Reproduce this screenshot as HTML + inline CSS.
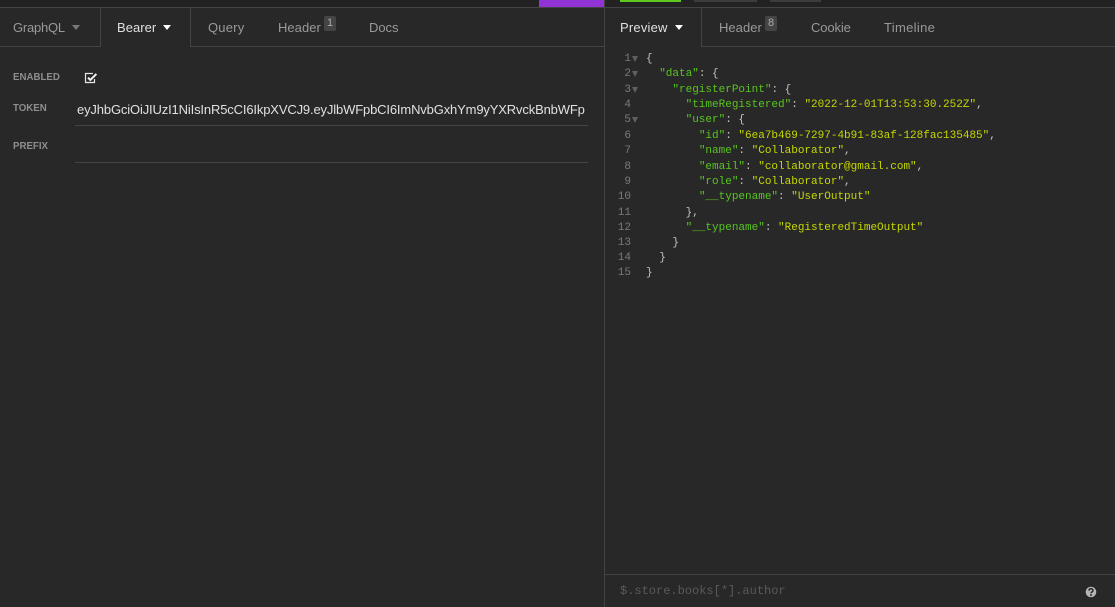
<!DOCTYPE html>
<html><head><meta charset="utf-8"><style>
html,body{margin:0;padding:0;width:1115px;height:607px;overflow:hidden;background:#282828}
body{position:relative;font-family:"Liberation Sans",sans-serif}
div{position:absolute}
.t{white-space:nowrap;font-size:13px;color:#999;top:20px;line-height:15px;letter-spacing:.2px}
.lb{white-space:nowrap;font-size:9.7px;font-weight:bold;color:#8e8e8e;left:13px;line-height:12px}
.ln{left:610px;width:21px;text-align:right;color:#7a7a7a}
.c{left:646px}
.m{font-family:"Liberation Mono",monospace;font-size:11px;line-height:15px;white-space:pre}
.c{color:#c4c4c4}
.k{color:#59c51f}.s{color:#c5d800}
.tri{width:0;height:0;border-left:4px solid transparent;border-right:4px solid transparent;border-top:5px solid #fff}
.f{left:632px;width:0;height:0;border-left:3.5px solid transparent;border-right:3.5px solid transparent;border-top:6px solid #5f5f5f}
.bd{background:#444;border-radius:2px;color:#aaa;font-size:11px;text-align:center;line-height:14px;width:12px;height:15px;top:16px}
</style></head><body>
<div style="left:0;top:0;width:1115px;height:7px;background:#222"></div>
<div style="left:0;top:7px;width:1115px;height:1px;background:#444"></div>
<div style="left:539px;top:0;width:65px;height:7px;background:#9233d6"></div>
<div style="left:620px;top:0;width:61px;height:2px;background:#5fc81f"></div>
<div style="left:694px;top:0;width:63px;height:2px;background:#3c3c3c"></div>
<div style="left:770px;top:0;width:51px;height:2px;background:#3c3c3c"></div>
<div style="left:604px;top:0;width:1px;height:607px;background:#444"></div>
<div style="left:0;top:46px;width:100px;height:1px;background:#444"></div>
<div style="left:191px;top:46px;width:413px;height:1px;background:#444"></div>
<div style="left:100px;top:8px;width:1px;height:39px;background:#444"></div>
<div style="left:190px;top:8px;width:1px;height:39px;background:#444"></div>
<div style="left:702px;top:46px;width:413px;height:1px;background:#444"></div>
<div style="left:701px;top:8px;width:1px;height:39px;background:#444"></div>
<div class="t" style="left:13px;letter-spacing:-.23px">GraphQL</div>
<div class="tri" style="left:72px;top:25px;border-top-color:#777"></div>
<div class="t" style="left:117px;color:#e0e0e0;letter-spacing:.03px">Bearer</div>
<div class="tri" style="left:163px;top:25px"></div>
<div class="t" style="left:208px">Query</div>
<div class="t" style="left:278px;letter-spacing:.03px">Header</div>
<div class="bd" style="left:324px">1</div>
<div class="t" style="left:369px;letter-spacing:-.05px">Docs</div>
<div class="t" style="left:620px;color:#e0e0e0">Preview</div>
<div class="tri" style="left:675px;top:25px"></div>
<div class="t" style="left:719px;letter-spacing:.03px">Header</div>
<div class="bd" style="left:765px">8</div>
<div class="t" style="left:811px;letter-spacing:-.13px">Cookie</div>
<div class="t" style="left:884px;letter-spacing:.32px">Timeline</div>
<div class="lb" style="top:72px">ENABLED</div>
<div class="lb" style="top:103px">TOKEN</div>
<div class="lb" style="top:141px">PREFIX</div>
<svg style="position:absolute;left:84px;top:71px" width="14" height="14" viewBox="0 0 14 14"><path d="M10.5 8V11.5H1.5V2.5H9" fill="none" stroke="#e6e6e6" stroke-width="1.2"/><path d="M4 6.6L6.3 9L12.4 3" fill="none" stroke="#f0f0f0" stroke-width="2"/></svg>
<div style="left:77px;top:102px;white-space:nowrap;font-size:13px;line-height:16px;color:#e0e0e0;letter-spacing:-.15px">eyJhbGciOiJIUzI1NiIsInR5cCI6IkpXVCJ9.eyJlbWFpbCI6ImNvbGxhYm9yYXRvckBnbWFp</div>
<div style="left:75px;top:125px;width:513px;height:1px;background:#444"></div>
<div style="left:75px;top:162px;width:513px;height:1px;background:#444"></div>
<div class="m ln" style="top:52px">1</div><div class="f" style="top:56px"></div>
<div class="m ln" style="top:67px">2</div><div class="f" style="top:71px"></div>
<div class="m ln" style="top:83px">3</div><div class="f" style="top:87px"></div>
<div class="m ln" style="top:98px">4</div>
<div class="m ln" style="top:113px">5</div><div class="f" style="top:117px"></div>
<div class="m ln" style="top:129px">6</div>
<div class="m ln" style="top:144px">7</div>
<div class="m ln" style="top:160px">8</div>
<div class="m ln" style="top:175px">9</div>
<div class="m ln" style="top:190px">10</div>
<div class="m ln" style="top:206px">11</div>
<div class="m ln" style="top:221px">12</div>
<div class="m ln" style="top:236px">13</div>
<div class="m ln" style="top:251px">14</div>
<div class="m ln" style="top:266px">15</div>
<div class="m c" style="top:52px">{</div>
<div class="m c" style="top:67px">  <span class="k">"data"</span>: {</div>
<div class="m c" style="top:83px">    <span class="k">"registerPoint"</span>: {</div>
<div class="m c" style="top:98px">      <span class="k">"timeRegistered"</span>: <span class="s">"2022-12-01T13:53:30.252Z"</span>,</div>
<div class="m c" style="top:113px">      <span class="k">"user"</span>: {</div>
<div class="m c" style="top:129px">        <span class="k">"id"</span>: <span class="s">"6ea7b469-7297-4b91-83af-128fac135485"</span>,</div>
<div class="m c" style="top:144px">        <span class="k">"name"</span>: <span class="s">"Collaborator"</span>,</div>
<div class="m c" style="top:160px">        <span class="k">"email"</span>: <span class="s">"collaborator@gmail.com"</span>,</div>
<div class="m c" style="top:175px">        <span class="k">"role"</span>: <span class="s">"Collaborator"</span>,</div>
<div class="m c" style="top:190px">        <span class="k">"__typename"</span>: <span class="s">"UserOutput"</span></div>
<div class="m c" style="top:206px">      },</div>
<div class="m c" style="top:221px">      <span class="k">"__typename"</span>: <span class="s">"RegisteredTimeOutput"</span></div>
<div class="m c" style="top:236px">    }</div>
<div class="m c" style="top:251px">  }</div>
<div class="m c" style="top:266px">}</div>
<div style="left:605px;top:574px;width:510px;height:1px;background:#444"></div>
<div style="left:620px;top:584px;font-family:'Liberation Mono',monospace;font-size:12px;line-height:15px;color:#5a5a5a;white-space:pre">$.store.books[*].author</div>
<svg style="position:absolute;left:1085px;top:586px" width="12" height="12" viewBox="0 0 12 12"><circle cx="6" cy="6" r="5.3" fill="#b5b5b5"/><path d="M4 4.6C4.1 2.2 8 2.2 8 4.5C8 5.9 6 5.8 6 7.3" fill="none" stroke="#282828" stroke-width="1.5"/><rect x="5.1" y="8.2" width="1.8" height="1.6" fill="#282828"/></svg>
</body></html>
